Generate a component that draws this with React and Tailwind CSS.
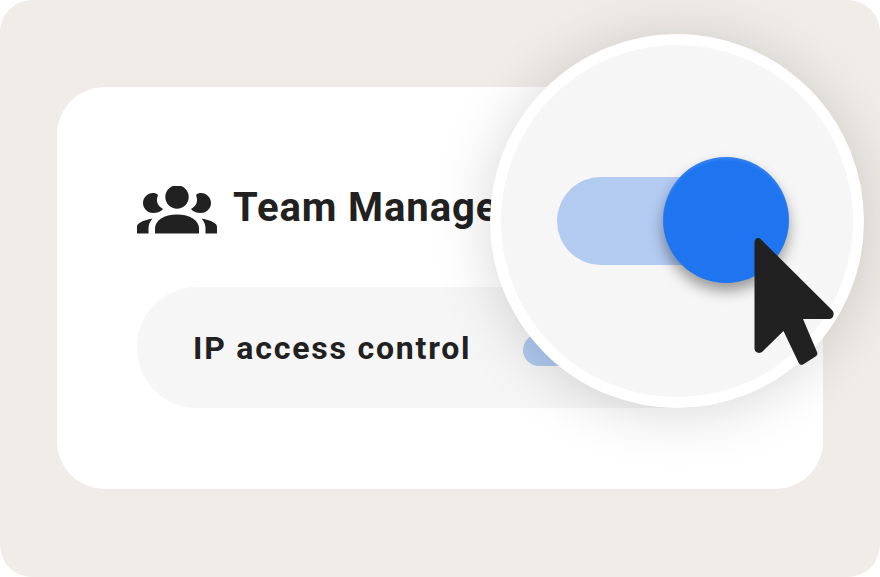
import React from "react";

function GroupIcon() {
  return (
    <svg width="80" height="48" viewBox="0 0 80 48" fill="#212121" className="shrink-0">
      <circle cx="40" cy="11" r="11.7" />
      <g>
        <path d="M16 7c2 0 3.700.6 5 2-.8 2.500-1.200 4-1 6 .2 3 2.500 6 6 8-2 2.500-5.500 4-10 4-5.500 0-10-4.500-10-10S10.500 7 16 7Z" />
        <path d="M0 47.500v-7c0-3 5-6 15.500-8-2.500 3-4 6-4 9.500v5.500Z" />
      </g>
      <g transform="translate(80 0) scale(-1 1)">
        <path d="M16 7c2 0 3.700.6 5 2-.8 2.500-1.200 4-1 6 .2 3 2.500 6 6 8-2 2.500-5.500 4-10 4-5.500 0-10-4.500-10-10S10.500 7 16 7Z" />
        <path d="M0 47.500v-7c0-3 5-6 15.500-8-2.500 3-4 6-4 9.500v5.500Z" />
      </g>
      <path d="M18 47.500v-5c0-8 9-14 22-14s22 6 22 14v5Z" />
    </svg>
  );
}

function Cursor() {
  return (
    <svg width="82" height="132" viewBox="0 0 82 132" className="absolute left-[753px] top-[236px]" fill="#212121">
      <path d="M1.500 6c0-3.500 3.500-5.500 6-3L79 74c3 3 1.500 9-2.500 9H50L64 116c.8 2 0 3.500-1.500 4.500L50 128.500c-2 .8-3.500 0-4.500-2L30.500 95 9.500 115.500c-3 3-8 1-8-3Z" />
    </svg>
  );
}

export default function App() {
  return (
    <div className="relative h-[577px] w-[880px] overflow-hidden bg-white" style={{ fontFamily: "Roboto, sans-serif" }}>
      <div className="h-[577px] w-[880px] rounded-[32px] bg-[#f0ede9] pl-[57px] pt-[87px]">
        <div className="flex h-[402px] w-[766px] flex-col rounded-[48px] bg-white px-[80px] pt-[99px]">
          <div className="flex items-start gap-[16px] whitespace-nowrap">
            <GroupIcon />
            <span className="text-[40px] font-bold leading-[44px] tracking-[0.9px] text-[#212121]">Team Management</span>
          </div>
          <div className="mt-[53px] flex h-[121px] w-[606px] items-center rounded-[60px] bg-[#f6f6f6] pl-[56px]">
            <span className="w-[330px] whitespace-nowrap text-[32px] font-bold tracking-[1.8px] text-[#212121]">IP access control</span>
            <div className="mt-[5px] h-[32px] w-[80px] rounded-full bg-[#b0c9f1]" />
          </div>
        </div>
      </div>

      <div className="absolute left-[490px] top-[34px] flex h-[374px] w-[374px] items-center rounded-full border-[11px] border-white bg-[#f6f6f6] pl-[56px] shadow-[0_4px_60px_rgba(0,0,0,0.16)]">
        <div className="flex h-[88px] w-[210px] items-center rounded-full bg-[#b3caf1]">
          <div className="mb-[2px] ml-[106px] h-[126px] w-[126px] shrink-0 rounded-full bg-[#1f75f0] shadow-[0_8px_14px_rgba(0,0,0,0.38),inset_0_3px_2px_rgba(255,255,255,0.08)]" />
        </div>
      </div>

      <Cursor />
    </div>
  );
}
